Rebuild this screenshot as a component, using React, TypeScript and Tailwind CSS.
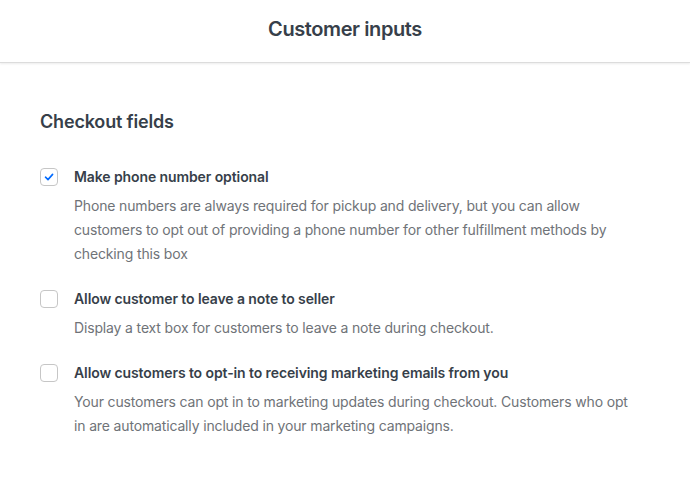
import React from 'react';

const fields = [
  {
    label: 'Make phone number optional',
    desc: 'Phone numbers are always required for pickup and delivery, but you can allow customers to opt out of providing a phone number for other fulfillment methods by checking this box',
    checked: true,
  },
  {
    label: 'Allow customer to leave a note to seller',
    desc: 'Display a text box for customers to leave a note during checkout.',
    checked: false,
  },
  {
    label: 'Allow customers to opt-in to receiving marketing emails from you',
    desc: 'Your customers can opt in to marketing updates during checkout. Customers who opt in are automatically included in your marketing campaigns.',
    checked: false,
  },
];

const Checkbox = ({ checked }: { checked: boolean }) => (
  <div className="w-[18px] h-[18px] shrink-0 rounded-[4px] border border-[#c6c6c6] bg-white flex items-center justify-center">
    {checked && (
      <svg width="12" height="12" viewBox="0 0 12 12" fill="none">
        <path d="M2.5 6.2 L5 8.6 L9.6 3.4" stroke="#006aff" strokeWidth="1.6" strokeLinecap="round" strokeLinejoin="round" />
      </svg>
    )}
  </div>
);

export default function App() {
  return (
    <div className="w-[690px] h-[482px] bg-white text-[#373f4a]" style={{ fontFamily: 'Inter, "Noto Sans", sans-serif' }}>
      {/* Header */}
      <div className="h-[63px] pb-[5px] flex items-center justify-center border-b border-[#dcdcdc] shadow-[0_1px_2px_rgba(0,0,0,0.08)]">
        <h1 className="text-[20px] font-semibold tracking-[-0.02em]">Customer inputs</h1>
      </div>

      <div className="px-[40px] pt-[46px]">
        <h2 className="text-[18px] font-semibold leading-[26px] tracking-[-0.01em]">Checkout fields</h2>

        <div className="mt-[32px] flex flex-col gap-[23px]">
          {fields.map((f) => (
            <div key={f.label} className="flex gap-[16px]">
              <div className="pt-[1px]">
                <Checkbox checked={f.checked} />
              </div>
              <div className="flex-1 pr-[10px]">
                <div className="text-[14px] font-semibold leading-[20px] tracking-[-0.1px]">{f.label}</div>
                <p className="mt-[7px] text-[14px] leading-[24px] tracking-[-0.15px] text-[#6f7378]">{f.desc}</p>
              </div>
            </div>
          ))}
        </div>
      </div>
    </div>
  );
}
